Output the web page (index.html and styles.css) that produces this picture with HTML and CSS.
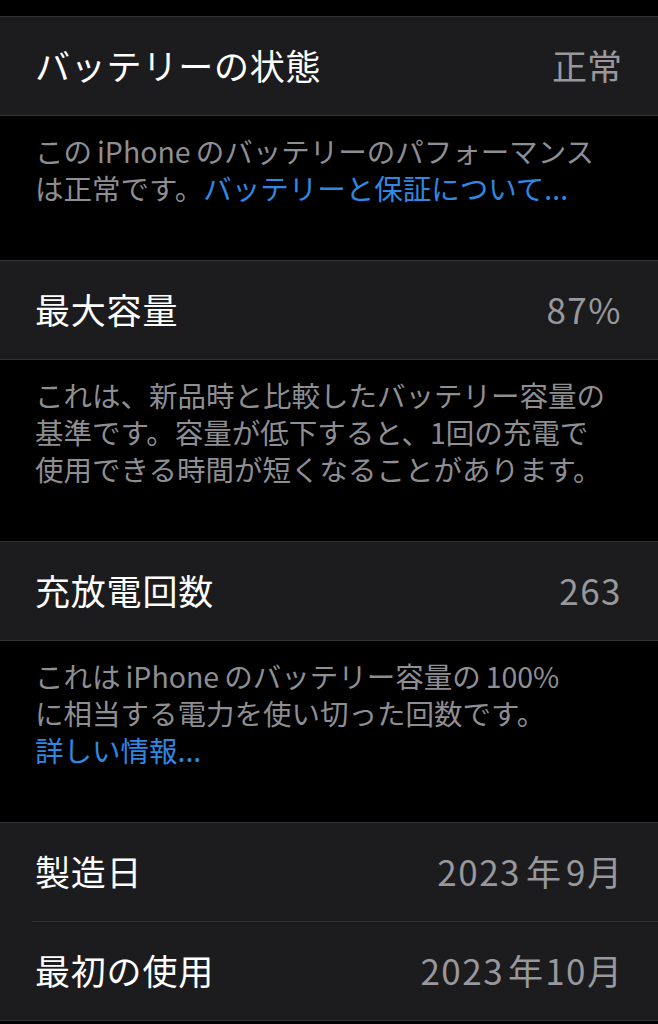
FILE: index.html
```html
<!DOCTYPE html>
<html lang="ja">
<head>
  <meta charset="UTF-8" />
  <meta name="viewport" content="width=device-width, initial-scale=1.0" />
  <title>バッテリーの状態</title>
  <link rel="stylesheet" href="styles.css">
</head>
<body>
  <div class="top-gap"></div>

  <div class="group">
    <div class="row">
      <span class="label">バッテリーの状態</span>
      <span class="value">正常</span>
    </div>
  </div>
  <p class="footer">
    この<span class="latin">iPhone</span>のバッテリーのパフォーマンス<br>
    は正常です。<a href="#" class="link">バッテリーと保証について...</a>
  </p>

  <div class="group">
    <div class="row">
      <span class="label">最大容量</span>
      <span class="value num">87%</span>
    </div>
  </div>
  <p class="footer">
    これは、新品時と比較したバッテリー容量の<br>
    基準です。容量が低下すると、1回の充電で<br>
    使用できる時間が短くなることがあります。
  </p>

  <div class="group">
    <div class="row">
      <span class="label">充放電回数</span>
      <span class="value num">263</span>
    </div>
  </div>
  <p class="footer">
    これは<span class="latin">iPhone</span>のバッテリー容量の<span class="latin">100%</span><br>
    に相当する電力を使い切った回数です。<br>
    <a href="#" class="link">詳しい情報...</a>
  </p>

  <div class="group">
    <div class="row">
      <span class="label">製造日</span>
      <span class="value"><span class="num">2023</span><span class="latin">年</span><span class="num">9</span>月</span>
    </div>
    <div class="row">
      <span class="label">最初の使用</span>
      <span class="value"><span class="num">2023</span><span class="latin tight">年</span><span class="num">10</span>月</span>
    </div>
  </div>
</body>
</html>
```

FILE: styles.css
```css
body {
  margin: 0;
  background-color: #000;
  color: #fff;
  font-family: "Noto Sans CJK JP", "Noto Sans", sans-serif;
  overflow: hidden;
}
.top-gap {
  height: 16px;
}
.group {
  background-color: #1c1c1e;
  border-top: 1px solid #333336;
  border-bottom: 1px solid #333336;
}
.row {
  display: flex;
  justify-content: space-between;
  align-items: center;
  box-sizing: border-box;
  height: 98px;
  margin-left: 32px;
  padding: 0 36px 3px 3px;
}
.row + .row {
  border-top: 1px solid #333336;
  height: 99px;
}
.label {
  font-size: 35px;
  letter-spacing: 0.8px;
  color: #fff;
}
.value {
  font-size: 35px;
  color: #98989d;
}
.num {
  letter-spacing: 1.5px;
}
.latin {
  margin: 0 5px;
}
.latin.tight {
  margin: 0 2px 0 4px;
}
.footer {
  margin: 0;
  padding: 16px 20px 54px 35px;
  font-size: 28.5px;
  line-height: 37px;
  color: #8e8e93;
  white-space: nowrap;
}
.link {
  color: #2f88e2;
  text-decoration: none;
}
```
